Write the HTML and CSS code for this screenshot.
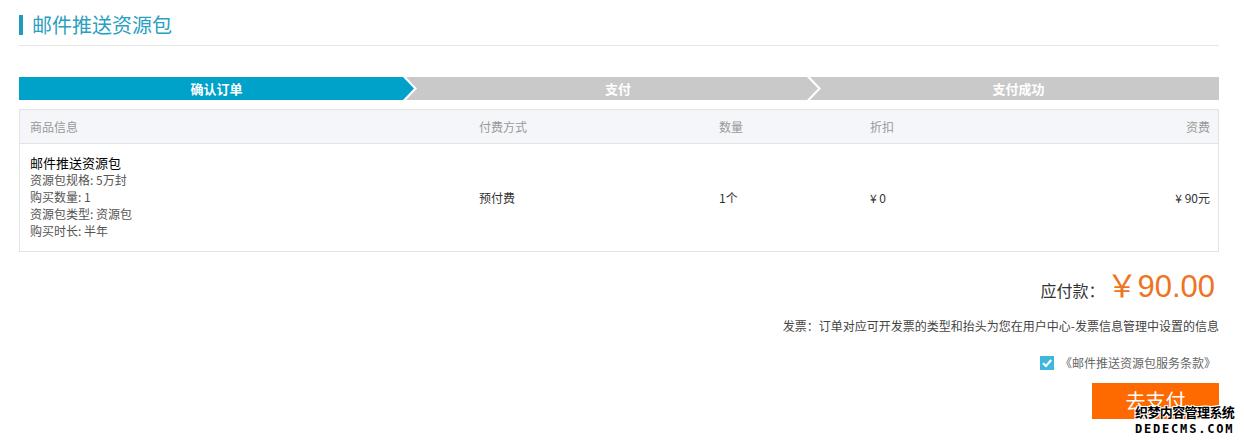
FILE: index.html
```html
<!DOCTYPE html>
<html>
	<head>
		<meta charset="UTF-8">
		<title>邮件推送资源包</title>
		<link rel="stylesheet" href="styles.css">
	</head>
	<body>
		<div id="page">
			<h2 class="title">邮件推送资源包</h2>

			<div class="steps">
				<div class="step first active">确认订单</div>
				<div class="step second">支付</div>
				<div class="step last">支付成功</div>
			</div>

			<table class="order">
				<thead>
					<tr>
						<th class="c1">商品信息</th>
						<th class="c2">付费方式</th>
						<th class="c3">数量</th>
						<th class="c4">折扣</th>
						<th class="c5">资费</th>
					</tr>
				</thead>
				<tbody>
					<tr>
						<td class="c1">
							<div class="name">邮件推送资源包</div>
							<div class="spec">资源包规格: 5万封</div>
							<div class="spec">购买数量: 1</div>
							<div class="spec">资源包类型: 资源包</div>
							<div class="spec">购买时长: 半年</div>
						</td>
						<td class="c2">预付费</td>
						<td class="c3">1个</td>
						<td class="c4">¥ 0</td>
						<td class="c5">¥ 90元</td>
					</tr>
				</tbody>
			</table>

			<div class="total">
				<span class="label">应付款：</span>
				<span class="price">￥90.00</span>
			</div>
			<div class="invoice">发票：订单对应可开发票的类型和抬头为您在用户中心-发票信息管理中设置的信息</div>
			<div class="agree">
				<span class="check">
					<svg width="14" height="14" viewBox="0 0 14 14">
						<rect width="14" height="14" fill="#3fb6dc"/>
						<path d="M3 7.2 L6 10 L11.2 4" fill="none" stroke="#fff" stroke-width="2.2"/>
					</svg>
				</span>
				<span class="terms">《邮件推送资源包服务条款》</span>
			</div>
			<div class="actions">
				<button class="pay">去支付</button>
			</div>
		</div>
		<div class="watermark">
			<div class="wm-cn">织梦内容管理系统</div>
			<div class="wm-en">DEDECMS.COM</div>
		</div>
	</body>
</html>
```

FILE: styles.css
```css
body {
	margin: 0;
	font-family: "Noto Sans CJK SC", "Noto Sans", sans-serif;
	color: #333;
	background: #fff;
	overflow: hidden;
}
#page {
	width: 1200px;
	margin-left: 19px;
}
.title {
	margin: 0;
	padding: 13px 0 8px 13px;
	border-bottom: 1px solid #e6e6e6;
	font-size: 20px;
	font-weight: normal;
	line-height: 24px;
	color: #2a9fc1;
	position: relative;
}
.title:before {
	content: "";
	position: absolute;
	left: 0;
	top: 15px;
	width: 4px;
	height: 20px;
	background: #1e9bbd;
}
.steps {
	display: flex;
	margin-top: 31px;
	height: 23px;
}
.step {
	flex: 1;
	margin-left: -8px;
	background: #c9c9c9;
	color: #fff;
	font-size: 13px;
	font-weight: bold;
	line-height: 23px;
	text-align: center;
	clip-path: polygon(0 0, calc(100% - 11px) 0, 100% 50%, calc(100% - 11px) 100%, 0 100%, 11px 50%);
}
.step.first {
	margin-left: 0;
	flex: 0 0 395px;
	clip-path: polygon(0 0, calc(100% - 11px) 0, 100% 50%, calc(100% - 11px) 100%, 0 100%);
}
.step.second {
	flex: 0 0 412px;
	padding-left: 12px;
	box-sizing: border-box;
}
.step.last {
	padding-left: 8px;
	clip-path: polygon(0 0, 100% 0, 100% 100%, 0 100%, 11px 50%);
}
.step.active {
	background: #00a2ca;
}
.order {
	width: 100%;
	margin-top: 9px;
	border-collapse: collapse;
	table-layout: fixed;
	border: 1px solid #e3e3e3;
	font-size: 12px;
}
.order th {
	height: 33px;
	padding: 0 10px;
	background: #f4f6f9;
	border-bottom: 1px solid #e3e3e3;
	color: #999;
	font-weight: normal;
	text-align: left;
}
.order td {
	padding: 11px 10px 12px 10px;
	vertical-align: middle;
	color: #333;
}
.c1 { width: 429px; }
.c2 { width: 220px; }
.c3 { width: 131px; }
.c4 { width: 180px; }
.order .c5 {
	text-align: right;
	padding-right: 8px;
}
.name {
	font-size: 13px;
	line-height: 16px;
	color: #000;
}
.spec {
	line-height: 17px;
	color: #555;
}
.total {
	display: flex;
	justify-content: flex-end;
	align-items: baseline;
	margin-top: 17px;
	padding-right: 4px;
}
.total .label {
	font-size: 16px;
	color: #333;
	margin-right: 2px;
}
.total .price {
	font-family: "Liberation Sans", "Noto Sans CJK SC", sans-serif;
	font-size: 31px;
	line-height: 36px;
	color: #f07321;
}
.invoice {
	margin-top: 13px;
	text-align: right;
	font-size: 12px;
	line-height: 16px;
	color: #444;
}
.agree {
	display: flex;
	justify-content: flex-end;
	align-items: center;
	margin-top: 20px;
	padding-right: 3px;
	font-size: 12px;
	color: #666;
}
.check {
	display: flex;
	margin-right: 6px;
}
.actions {
	display: flex;
	justify-content: flex-end;
	margin-top: 12px;
}
.pay {
	width: 127px;
	height: 36px;
	border: 0;
	background: #ff6a00;
	color: #fff;
	font-family: "Noto Sans CJK SC", sans-serif;
	font-size: 20px;
	line-height: 36px;
	padding: 0;
}
.watermark {
	position: absolute;
	left: 1135px;
	top: 402px;
	font-weight: bold;
	color: #000;
	text-shadow: -1px -1px 0 #fff, 1px -1px 0 #fff, -1px 1px 0 #fff, 1px 1px 0 #fff;
}
.wm-cn {
	font-size: 13px;
	line-height: 19px;
	letter-spacing: -0.6px;
}
.wm-en {
	font-family: "DejaVu Sans Mono", monospace;
	font-size: 12px;
	line-height: 16px;
	letter-spacing: 1.8px;
}
```
